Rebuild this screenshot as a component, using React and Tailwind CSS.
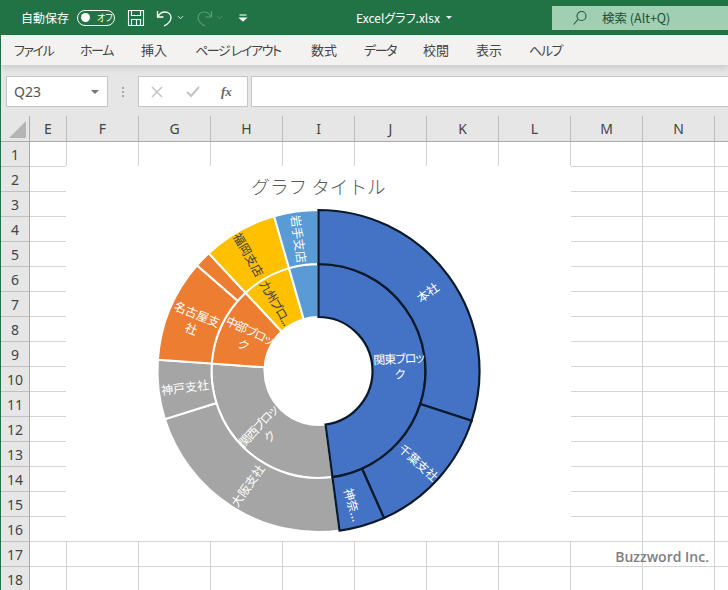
import React from 'react';
import { ChevronDown } from 'lucide-react';

const jp = "font-['Noto_Sans_CJK_JP','Noto_Sans',sans-serif] [font-feature-settings:'palt']";

const menus = [
  ['ファイル', 38, true], ['ホーム', 33, true], ['挿入', 26], ['ページ レイアウト', 88, true], ['数式', 25],
  ['データ', 31, true], ['校閲', 25], ['表示', 25], ['ヘルプ', 32, true],
];

const columns = [
  ['E', 37], ['F', 72], ['G', 72], ['H', 72], ['I', 72], ['J', 72], ['K', 72], ['L', 72], ['M', 72], ['N', 72], ['', 14],
];
const rows = Array.from({ length: 18 }, (_, i) => i + 1);

// 中心と半径はスクリーンショットから計測
const CX = 318.5;
const CY = 371;
const R_HOLE = 54;
const R_MID = 107;
const R_OUT = 161;

const BLUE = '#4472c4';
const ORANGE = '#ed7d31';
const GRAY = '#a5a5a5';
const YELLOW = '#ffc000';
const SKY = '#5b9bd5';

const plainSegments = [
  { from: 172.5, to: 274, r0: R_HOLE, r1: R_MID, fill: GRAY },
  { from: 274, to: 317, r0: R_HOLE, r1: R_MID, fill: ORANGE },
  { from: 317, to: 344, r0: R_HOLE, r1: R_MID, fill: YELLOW },
  { from: 344, to: 360, r0: R_HOLE, r1: R_MID, fill: SKY },
  { from: 172.5, to: 252.6, r0: R_MID, r1: R_OUT, fill: GRAY },
  { from: 252.6, to: 274, r0: R_MID, r1: R_OUT, fill: GRAY },
  { from: 274, to: 311, r0: R_MID, r1: R_OUT, fill: ORANGE },
  { from: 311, to: 317, r0: R_MID, r1: R_OUT, fill: ORANGE },
  { from: 317, to: 344, r0: R_MID, r1: R_OUT, fill: YELLOW },
  { from: 344, to: 360, r0: R_MID, r1: R_OUT, fill: SKY },
];

const selectedSegments = [
  { from: 0, to: 172.5, r0: R_HOLE, r1: R_MID },
  { from: 0, to: 108, r0: R_MID, r1: R_OUT },
  { from: 108, to: 156, r0: R_MID, r1: R_OUT },
  { from: 156, to: 172.5, r0: R_MID, r1: R_OUT },
];

const labels = [
  { x: 428, y: 293, rot: -36, lines: ['本社'] },
  { x: 418, y: 463, rot: 42, lines: ['千葉支社'] },
  { x: 352, y: 505, rot: 74, lines: ['神奈...'] },
  { x: 399, y: 367, rot: -3, lines: ['関東ブロッ', 'ク'], tight: true },
  { x: 248, y: 486, rot: -55, lines: ['大阪支社'] },
  { x: 185, y: 388, rot: -7, lines: ['神戸支社'] },
  { x: 194, y: 322, rot: 22, lines: ['名古屋支', '社'] },
  { x: 248, y: 255, rot: 60, lines: ['福岡支店'], dark: true },
  { x: 298, y: 239, rot: 82, lines: ['岩手支店'] },
  { x: 246, y: 338, rot: 25, lines: ['中部ブロッ', 'ク'], tight: true },
  { x: 275, y: 303, rot: 60, lines: ['九州ブロ...'], dark: true, tight: true },
  { x: 264, y: 432, rot: -47, lines: ['関西ブロッ', 'ク'], tight: true },
];

function polar(angle, r) {
  const a = (angle * Math.PI) / 180;
  return [CX + r * Math.sin(a), CY - r * Math.cos(a)];
}

function ringPath({ from, to, r0, r1 }) {
  const [ax, ay] = polar(from, r1);
  const [bx, by] = polar(to, r1);
  const [cx, cy] = polar(to, r0);
  const [dx, dy] = polar(from, r0);
  const large = to - from > 180 ? 1 : 0;
  return `M${ax} ${ay}A${r1} ${r1} 0 ${large} 1 ${bx} ${by}L${cx} ${cy}A${r0} ${r0} 0 ${large} 0 ${dx} ${dy}Z`;
}

function Label({ x, y, rot, lines, dark, tight }) {
  return (
    <text
      transform={`translate(${x} ${y}) rotate(${rot})`}
      textAnchor="middle"
      className={`${jp} text-[12px] ${dark ? 'fill-[#404040]' : 'fill-white'} ${tight ? 'tracking-[-1px]' : ''}`}
    >
      {lines.map((line, i) => (
        <tspan key={line} x="0" y={(i - (lines.length - 1) / 2) * 15.5 + 4}>{line}</tspan>
      ))}
    </text>
  );
}

function SunburstChart() {
  return (
    <div className="absolute left-[65px] top-[50px] w-[505px] h-[375px] bg-white">
      <svg viewBox="66 166 505 375" className="w-full h-full">
        <text x="318.5" y="194" textAnchor="middle" className="font-['Noto_Sans_CJK_JP',sans-serif] font-light text-[18.6px] fill-[#595959]">グラフ タイトル</text>
        {plainSegments.map((s) => (
          <path key={`${s.r0}-${s.from}`} d={ringPath(s)} fill={s.fill} stroke="#fff" strokeWidth="2" />
        ))}
        {selectedSegments.map((s) => (
          <path key={`${s.r0}-${s.from}`} d={ringPath(s)} fill={BLUE} stroke="#0a1a2a" strokeWidth="2.2" />
        ))}
        {labels.map((l) => <Label key={l.lines[0]} {...l} />)}
      </svg>
    </div>
  );
}

function TitleBar() {
  return (
    <div className="h-[35px] bg-[#217346] flex items-center text-white relative shrink-0">
      <span className={`${jp} text-[12px] ml-[20px] w-[48px] whitespace-nowrap`}>自動保存</span>
      <div className="ml-[8px] w-[38px] h-[16px] rounded-full border border-white flex items-center">
        <span className="ml-[3px] w-[9px] h-[9px] rounded-full bg-white" />
        <span className={`${jp} ml-[7px] text-[9px] leading-none whitespace-nowrap`}>オフ</span>
      </div>
      <svg width="18" height="18" viewBox="0 0 18 18" fill="none" stroke="#fff" strokeWidth="1.1" className="ml-[12px]">
        <path d="M1.5 1.5h15v15h-15z" />
        <path d="M4.5 1.5v5h9v-5M4.5 16.500v-6h9v6M9.500 10.500v6" />
      </svg>
      <svg width="18" height="18" viewBox="0 0 18 18" fill="none" stroke="#fff" strokeWidth="1.3" className="ml-[11px]">
        <path d="M1.500 2v6h6" />
        <path d="M1.800 7.800C3.500 4.500 6 3 9 3c3.500 0 6 2.500 6 5.500 0 3.500-3 6.500-7 8.500" />
      </svg>
      <ChevronDown size={9} strokeWidth={2.2} className="ml-[2px]" />
      <svg width="18" height="18" viewBox="0 0 18 18" fill="none" stroke="#5a9a78" strokeWidth="1.2" className="ml-[10px]">
        <path d="M16.500 2v6h-6" />
        <path d="M16.200 7.800C14.500 4.500 12 3 9 3 5.500 3 3 5.500 3 8.500c0 3.500 3 6.500 7 8.500" />
      </svg>
      <ChevronDown size={9} strokeWidth={2} className="ml-[2px] text-[#5a9a78]" />
      <svg width="10" height="10" viewBox="0 0 10 10" fill="none" stroke="#fff" strokeWidth="1.1" className="ml-[14px]">
        <path d="M1.500 2h7" />
        <path d="M1.800 5l3.200 3 3.200-3z" fill="#fff" />
      </svg>
      <span className={`${jp} text-[12px] ml-[108px] w-[83px] whitespace-nowrap`}>Excelグラフ.xlsx</span>
      <span className="ml-[7px] w-0 h-0 border-x-[3px] border-x-transparent border-t-[3px] border-t-white" />
      <div className="absolute right-0 top-[6px] w-[176px] h-[24px] bg-[#a0cfb2] flex items-center text-[#1f4e36]">
        <svg width="16" height="16" viewBox="0 0 16 16" fill="none" stroke="#1f5c3c" strokeWidth="1.1" className="ml-[20px]">
          <circle cx="9.500" cy="6" r="4.500" />
          <path d="M6.200 9.300L1.500 14.500" />
        </svg>
        <span className={`${jp} text-[12.500px] ml-[14px] whitespace-nowrap`}>検索 (Alt+Q)</span>
      </div>
    </div>
  );
}

function MenuBar() {
  return (
    <div className="h-[30px] bg-[#f3f2f1] flex items-center pl-[13px] gap-[28px] shrink-0 relative z-10 shadow-[0_3px_6px_rgba(0,0,0,0.12)]">
      {menus.map(([name, w, kana]) => (
        <span
          key={name}
          style={{ width: w }}
          className={`${jp} text-[13px] text-[#444] whitespace-nowrap ${kana ? 'tracking-[-1.4px]' : ''}`}
        >
          {name}
        </span>
      ))}
    </div>
  );
}

function FormulaBar() {
  return (
    <div className="h-[51px] bg-[#e6e6e6] flex items-start pt-[11px] shrink-0">
      <div className="ml-[5px] w-[102px] h-[31px] bg-white border border-[#c6c6c6] flex items-center justify-between px-[7px]">
        <span className="font-['Noto_Sans',sans-serif] text-[14px] text-[#555]">Q23</span>
        <span className="mr-[1px] w-0 h-0 border-x-[4px] border-x-transparent border-t-[4px] border-t-[#777]" />
      </div>
      <div className="w-[30px] h-[31px] flex flex-col items-center justify-center gap-[2px]">
        <span className="w-[2px] h-[2px] bg-[#aaa]" />
        <span className="w-[2px] h-[2px] bg-[#aaa]" />
        <span className="w-[2px] h-[2px] bg-[#aaa]" />
      </div>
      <div className="w-[110px] h-[31px] bg-white border border-[#c6c6c6] flex items-center">
        <svg width="12" height="12" viewBox="0 0 12 12" fill="none" stroke="#c4c4c4" strokeWidth="1.500" className="ml-[12px]">
          <path d="M1 1l10 10M11 1L1 11" />
        </svg>
        <svg width="14" height="12" viewBox="0 0 14 12" fill="none" stroke="#c4c4c4" strokeWidth="2" className="ml-[23px]">
          <path d="M1 6l4 4 8-9" />
        </svg>
        <span className="ml-[21px] font-['Liberation_Serif',serif] italic font-bold text-[13px] text-[#666] leading-none">fx</span>
      </div>
      <div className="ml-[3px] flex-1 h-[31px] bg-white border border-[#c6c6c6] border-r-0" />
    </div>
  );
}

function Sheet() {
  return (
    <div className="relative flex-1 overflow-hidden">
      <div className="flex h-[26px] bg-[#e6e6e6] border-b border-[#ababab]">
        <div className="w-[29px] shrink-0 border-r border-[#ababab] flex items-end justify-end pr-[3px] pb-[3px]">
          <span className="w-0 h-0 border-l-[17px] border-l-transparent border-b-[17px] border-b-[#b5b5b5]" />
        </div>
        {columns.map(([name, w]) => (
          <div
            key={name || 'end'}
            style={{ width: w }}
            className="shrink-0 border-r border-[#bdbdbd] flex items-center justify-center font-['Noto_Sans',sans-serif] text-[14px] text-[#444]"
          >
            {name}
          </div>
        ))}
      </div>
      {rows.map((row) => (
        <div key={row} className="flex h-[25px] bg-white border-b border-[#d4d4d4]">
          <div className="w-[29px] shrink-0 -mb-px bg-[#e6e6e6] border-r border-b border-r-[#ababab] border-b-[#c0c0c0] flex items-center justify-center font-['Noto_Sans',sans-serif] text-[14px] text-[#444]">
            {row}
          </div>
          {columns.map(([name, w]) => (
            <div key={name || 'end'} style={{ width: w }} className="shrink-0 border-r border-[#d4d4d4]" />
          ))}
        </div>
      ))}
      <SunburstChart />
      <span className="absolute right-[19px] top-[430px] font-['Open_Sans',sans-serif] font-semibold text-[14px] text-[#7f7f7f]">Buzzword Inc.</span>
    </div>
  );
}

export default function App() {
  return (
    <div className="w-[728px] h-[590px] overflow-hidden flex flex-col bg-[#e6e6e6] border-l border-[#217346]">
      <TitleBar />
      <MenuBar />
      <FormulaBar />
      <Sheet />
    </div>
  );
}
